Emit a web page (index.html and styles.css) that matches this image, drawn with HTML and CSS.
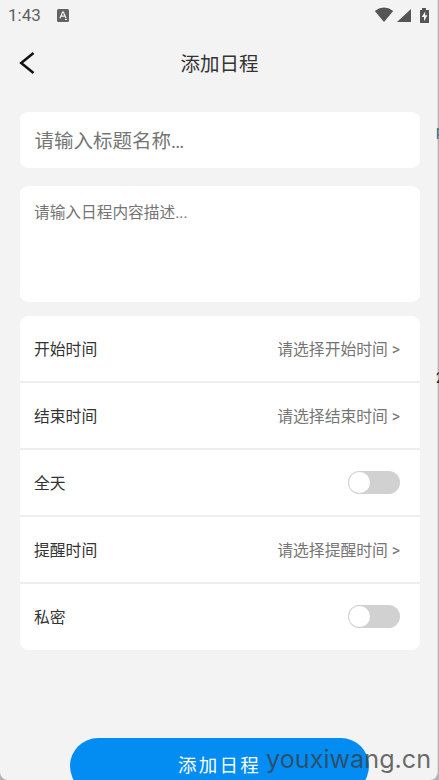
FILE: index.html
```
<!DOCTYPE html>
<html lang="zh-CN">
<head>
<meta charset="utf-8">
<title>添加日程</title>
<link rel="stylesheet" href="styles.css">
</head>
<body>
<div class="screen">
  <header class="status">
    <span class="clock">1:43</span>
    <svg class="app-icon" width="12" height="13" viewBox="0 0 12 13"><rect x="0" y="0" width="12" height="13" rx="1.5" fill="#626262"/><path d="M3 9.2 5.6 3h.8L9 9.2M4 7.2h4M8 10.5h2" fill="none" stroke="#f3f3f3" stroke-width="1.2"/></svg>
    <svg class="system" width="57" height="18" viewBox="0 0 57 18" fill="#555">
      <path d="M.8 5Q10 -1.8 19.2 5L10 16Z"/>
      <path d="M37 3v13H23Z"/>
      <path d="M48 2h4v2h3v13h-9V4h2Z"/>
      <path d="M51.2 5.5 47.7 11h2.3v4.3l3.5-6h-2.3Z" fill="#f3f3f3"/>
    </svg>
  </header>
  <nav class="navbar">
    <svg class="back" width="16" height="24" viewBox="0 0 16 24"><path d="M14.5 2 2.2 12 14.5 22" fill="none" stroke="#111" stroke-width="2.5"/></svg>
    <h1 class="title">添加日程</h1>
  </nav>
  <main class="form">
    <div class="card name">请输入标题名称<span class="dots">...</span></div>
    <div class="card description">请输入日程内容描述...</div>
    <div class="card options">
      <div class="row"><span>开始时间</span><span class="value">请选择开始时间 &gt;</span></div>
      <div class="row"><span>结束时间</span><span class="value">请选择结束时间 &gt;</span></div>
      <div class="row"><span>全天</span><span class="switch"></span></div>
      <div class="row"><span>提醒时间</span><span class="value">请选择提醒时间 &gt;</span></div>
      <div class="row"><span>私密</span><span class="switch"></span></div>
    </div>
  </main>
  <div class="submit">添加日程</div>
</div>
<div class="peek peek-top">p</div>
<div class="peek peek-mid">2</div>
<div class="watermark">youxiwang.cn</div>
</body>
</html>
```

FILE: styles.css
```
* { box-sizing: border-box; }
body {
  margin: 0;
  width: 439px;
  height: 780px;
  overflow: hidden;
  position: relative;
  background: #b2b2b2;
  font-family: Roboto, "Noto Sans CJK SC", sans-serif;
  color: #333;
}
.screen {
  width: 438px;
  height: 780px;
  overflow: hidden;
  background: #f3f3f3;
  border-right: 1px solid #dcdcdc;
  border-radius: 0 0 8px 8px;
}
.status {
  height: 30px;
  padding: 0 6px 0 8px;
  display: flex;
  align-items: center;
}
.clock { width: 49px; font-size: 17px; line-height: 30px; color: #606060; }
.system { margin-left: auto; margin-top: -1px; }
.navbar {
  height: 66px;
  display: grid;
  grid-template-columns: 60px 1fr 60px;
  align-items: center;
}
.back { margin-left: 19px; }
.title {
  margin: 0 0 0 2px;
  padding-top: 3px;
  text-align: center;
  font-size: 19.5px;
  line-height: 28px;
  font-weight: 400;
}
.form { padding: 16px 17px 0 20px; }
.card { width: 400px; background: #fff; border-radius: 8px; }
.name {
  height: 56px;
  padding: 2px 0 0 14.5px;
  font-size: 19.5px;
  line-height: 56px;
  color: #757575;
}
.dots { letter-spacing: -1px; }
.description {
  height: 116px;
  margin-top: 18px;
  padding: 15px 14px;
  font-size: 15.7px;
  line-height: 24px;
  color: #757575;
}
.options { height: 334px; margin-top: 14px; overflow: hidden; }
.row {
  height: 67px;
  padding: 0 20px 0 14px;
  display: flex;
  align-items: center;
  justify-content: space-between;
  font-size: 15.8px;
  border-bottom: 2px solid #eee;
}
.row:last-child { height: 66px; padding-bottom: 1px; border-bottom: 0; }
.value { color: #757575; }
.switch {
  width: 52px;
  height: 23px;
  padding: 1px;
  border-radius: 12px;
  background: #d1d1d1;
}
.switch::before {
  content: "";
  display: block;
  width: 21px;
  height: 21px;
  border-radius: 50%;
  background: #fff;
}
.submit {
  width: 299px;
  height: 56px;
  margin: 88px 0 0 70px;
  border-radius: 28px;
  background: #038cf2;
  color: #fff;
  font-size: 18.5px;
  line-height: 57px;
  letter-spacing: 2.2px;
  text-align: center;
}
.peek {
  position: absolute;
  right: 0;
  width: 3px;
  overflow: hidden;
  font-size: 14px;
  line-height: 18px;
  color: #222;
}
.peek-top { top: 122px; color: #356b88; }
.peek-mid { top: 369px; }
.watermark {
  position: absolute;
  left: 266px;
  top: 742px;
  font-family: Inter, sans-serif;
  font-size: 25.2px;
  line-height: 34px;
  color: rgba(60, 60, 60, .75);
}
```
